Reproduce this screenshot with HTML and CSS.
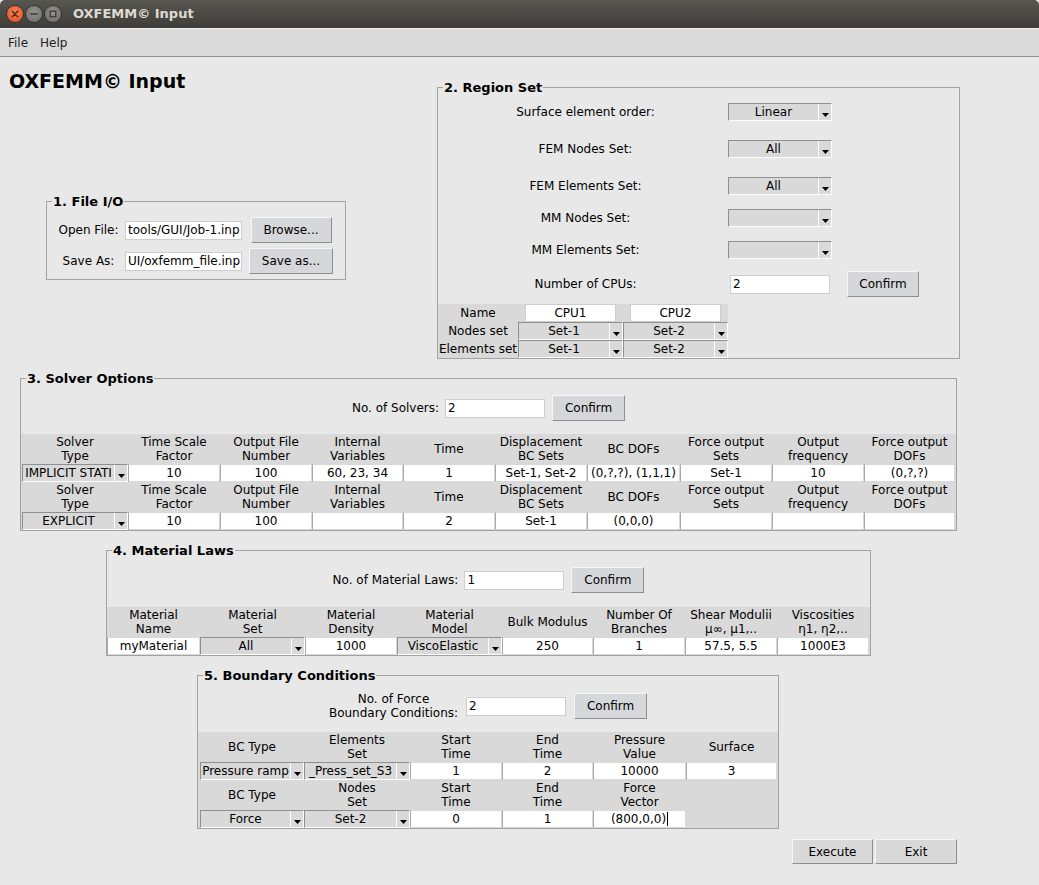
FILE: index.html
```html
<!DOCTYPE html>
<html lang="en">
<head>
<meta charset="utf-8">
<title>OXFEMM© Input</title>
<link rel="stylesheet" href="styles.css">
</head>
<body>
<div class="titlebar">
  <div class="wm-buttons">
    <span class="wm wm-close"><svg width="8" height="8" viewBox="0 0 8 8"><path d="M1.3 1.3L6.7 6.7M6.7 1.3L1.3 6.7" stroke="#4a2416" stroke-width="1.5" stroke-linecap="round"/></svg></span>
    <span class="wm wm-min"><svg width="8" height="8" viewBox="0 0 8 8"><path d="M1 4H7" stroke="#3a3935" stroke-width="1.5" stroke-linecap="round"/></svg></span>
    <span class="wm wm-max"><svg width="8" height="8" viewBox="0 0 8 8"><rect x="1.2" y="1.2" width="5.6" height="5.6" fill="none" stroke="#3a3935" stroke-width="1.3"/></svg></span>
  </div>
  <span class="wm-title">OXFEMM© Input</span>
</div>
<div class="menubar"><span>File</span><span>Help</span></div>
<main class="content">
  <div class="top">
    <div class="left">
      <h1 class="app-title">OXFEMM© Input</h1>
      <fieldset class="frame fileio">
        <legend>1. File I/O</legend>
        <div class="io-grid">
          <span class="io-label">Open File:</span>
          <div class="entry io-entry">tools/GUI/Job-1.inp</div>
          <button class="btn btn-browse">Browse...</button>
          <span class="io-label">Save As:</span>
          <div class="entry io-entry">UI/oxfemm_file.inp</div>
          <button class="btn btn-saveas">Save as...</button>
        </div>
      </fieldset>
    </div>
    <fieldset class="frame region">
      <legend>2. Region Set</legend>
      <div class="rrow">
        <span class="rlabel">Surface element order:</span>
        <div class="dd dd-region"><span class="dd-text">Linear</span><span class="arr"><svg width="7" height="4" viewBox="0 0 7 4"><path d="M0 0H7L3.5 4Z"/></svg></span></div>
      </div>
      <div class="rrow g19">
        <span class="rlabel">FEM Nodes Set:</span>
        <div class="dd dd-region"><span class="dd-text">All</span><span class="arr"><svg width="7" height="4" viewBox="0 0 7 4"><path d="M0 0H7L3.5 4Z"/></svg></span></div>
      </div>
      <div class="rrow g19">
        <span class="rlabel">FEM Elements Set:</span>
        <div class="dd dd-region"><span class="dd-text">All</span><span class="arr"><svg width="7" height="4" viewBox="0 0 7 4"><path d="M0 0H7L3.5 4Z"/></svg></span></div>
      </div>
      <div class="rrow g14">
        <span class="rlabel">MM Nodes Set:</span>
        <div class="dd dd-region"><span class="dd-text"></span><span class="arr"><svg width="7" height="4" viewBox="0 0 7 4"><path d="M0 0H7L3.5 4Z"/></svg></span></div>
      </div>
      <div class="rrow g14">
        <span class="rlabel">MM Elements Set:</span>
        <div class="dd dd-region"><span class="dd-text"></span><span class="arr"><svg width="7" height="4" viewBox="0 0 7 4"><path d="M0 0H7L3.5 4Z"/></svg></span></div>
      </div>
      <div class="rrow cpu-row">
        <span class="rlabel">Number of CPUs:</span>
        <div class="entry cpu-entry">2</div>
        <button class="btn btn-confirm cpu-confirm">Confirm</button>
      </div>
      <div class="cpu-table">
        <div class="ct-label">Name</div>
        <div class="ct-slot"><div class="entry ct-entry">CPU1</div></div>
        <div class="ct-slot"><div class="entry ct-entry">CPU2</div></div>
        <div class="ct-label">Nodes set</div>
        <div class="dd"><span class="dd-text">Set-1</span><span class="arr"><svg width="7" height="4" viewBox="0 0 7 4"><path d="M0 0H7L3.5 4Z"/></svg></span></div>
        <div class="dd"><span class="dd-text">Set-2</span><span class="arr"><svg width="7" height="4" viewBox="0 0 7 4"><path d="M0 0H7L3.5 4Z"/></svg></span></div>
        <div class="ct-label">Elements set</div>
        <div class="dd"><span class="dd-text">Set-1</span><span class="arr"><svg width="7" height="4" viewBox="0 0 7 4"><path d="M0 0H7L3.5 4Z"/></svg></span></div>
        <div class="dd"><span class="dd-text">Set-2</span><span class="arr"><svg width="7" height="4" viewBox="0 0 7 4"><path d="M0 0H7L3.5 4Z"/></svg></span></div>
      </div>
    </fieldset>
  </div>

  <fieldset class="frame solver">
    <legend>3. Solver Options</legend>
    <div class="ctrl-row">
      <span class="ctrl-label">No. of Solvers:</span>
      <div class="entry ctrl-entry">2</div>
      <button class="btn btn-confirm">Confirm</button>
    </div>
    <div class="grid-table solver-table">
      <div class="th">Solver<br>Type</div>
      <div class="th">Time Scale<br>Factor</div>
      <div class="th">Output File<br>Number</div>
      <div class="th">Internal<br>Variables</div>
      <div class="th">Time</div>
      <div class="th">Displacement<br>BC Sets</div>
      <div class="th">BC DOFs</div>
      <div class="th">Force output<br>Sets</div>
      <div class="th">Output<br>frequency</div>
      <div class="th">Force output<br>DOFs</div>

      <div class="dd"><span class="dd-text">IMPLICIT STATI</span><span class="arr"><svg width="7" height="4" viewBox="0 0 7 4"><path d="M0 0H7L3.5 4Z"/></svg></span></div>
      <div class="td">10</div>
      <div class="td">100</div>
      <div class="td">60, 23, 34</div>
      <div class="td">1</div>
      <div class="td">Set-1, Set-2</div>
      <div class="td">(0,?,?), (1,1,1)</div>
      <div class="td">Set-1</div>
      <div class="td">10</div>
      <div class="td">(0,?,?)</div>

      <div class="th">Solver<br>Type</div>
      <div class="th">Time Scale<br>Factor</div>
      <div class="th">Output File<br>Number</div>
      <div class="th">Internal<br>Variables</div>
      <div class="th">Time</div>
      <div class="th">Displacement<br>BC Sets</div>
      <div class="th">BC DOFs</div>
      <div class="th">Force output<br>Sets</div>
      <div class="th">Output<br>frequency</div>
      <div class="th">Force output<br>DOFs</div>

      <div class="dd"><span class="dd-text">EXPLICIT</span><span class="arr"><svg width="7" height="4" viewBox="0 0 7 4"><path d="M0 0H7L3.5 4Z"/></svg></span></div>
      <div class="td">10</div>
      <div class="td">100</div>
      <div class="td"></div>
      <div class="td">2</div>
      <div class="td">Set-1</div>
      <div class="td">(0,0,0)</div>
      <div class="td"></div>
      <div class="td"></div>
      <div class="td"></div>
    </div>
  </fieldset>

  <fieldset class="frame material">
    <legend>4. Material Laws</legend>
    <div class="ctrl-row">
      <span class="ctrl-label">No. of Material Laws:</span>
      <div class="entry ctrl-entry">1</div>
      <button class="btn btn-confirm">Confirm</button>
    </div>
    <div class="grid-table material-table">
      <div class="th">Material<br>Name</div>
      <div class="th">Material<br>Set</div>
      <div class="th">Material<br>Density</div>
      <div class="th">Material<br>Model</div>
      <div class="th">Bulk Modulus</div>
      <div class="th">Number Of<br>Branches</div>
      <div class="th">Shear Modulii<br>μ∞, μ1,..</div>
      <div class="th">Viscosities<br>η1, η2,..</div>

      <div class="td">myMaterial</div>
      <div class="dd"><span class="dd-text">All</span><span class="arr"><svg width="7" height="4" viewBox="0 0 7 4"><path d="M0 0H7L3.5 4Z"/></svg></span></div>
      <div class="td">1000</div>
      <div class="dd"><span class="dd-text">ViscoElastic</span><span class="arr"><svg width="7" height="4" viewBox="0 0 7 4"><path d="M0 0H7L3.5 4Z"/></svg></span></div>
      <div class="td">250</div>
      <div class="td">1</div>
      <div class="td">57.5, 5.5</div>
      <div class="td">1000E3</div>
    </div>
  </fieldset>

  <fieldset class="frame bc">
    <legend>5. Boundary Conditions</legend>
    <div class="ctrl-row bc-ctrl">
      <span class="ctrl-label bc-label">No. of Force<br>Boundary Conditions:</span>
      <div class="entry ctrl-entry">2</div>
      <button class="btn btn-confirm">Confirm</button>
    </div>
    <div class="grid-table bc-table">
      <div class="th">BC Type</div>
      <div class="th">Elements<br>Set</div>
      <div class="th">Start<br>Time</div>
      <div class="th">End<br>Time</div>
      <div class="th">Pressure<br>Value</div>
      <div class="th">Surface</div>

      <div class="dd"><span class="dd-text">Pressure ramp</span><span class="arr"><svg width="7" height="4" viewBox="0 0 7 4"><path d="M0 0H7L3.5 4Z"/></svg></span></div>
      <div class="dd"><span class="dd-text">_Press_set_S3</span><span class="arr"><svg width="7" height="4" viewBox="0 0 7 4"><path d="M0 0H7L3.5 4Z"/></svg></span></div>
      <div class="td">1</div>
      <div class="td">2</div>
      <div class="td">10000</div>
      <div class="td">3</div>

      <div class="th">BC Type</div>
      <div class="th">Nodes<br>Set</div>
      <div class="th">Start<br>Time</div>
      <div class="th">End<br>Time</div>
      <div class="th">Force<br>Vector</div>
      <div class="th"></div>

      <div class="dd"><span class="dd-text">Force</span><span class="arr"><svg width="7" height="4" viewBox="0 0 7 4"><path d="M0 0H7L3.5 4Z"/></svg></span></div>
      <div class="dd"><span class="dd-text">Set-2</span><span class="arr"><svg width="7" height="4" viewBox="0 0 7 4"><path d="M0 0H7L3.5 4Z"/></svg></span></div>
      <div class="td">0</div>
      <div class="td">1</div>
      <div class="td"><span class="caret">(800,0,0)</span></div>
      <div class="blank"></div>
    </div>
  </fieldset>

  <div class="actions">
    <button class="btn btn-action btn-execute">Execute</button>
    <button class="btn btn-action btn-exit">Exit</button>
  </div>
</main>
</body>
</html>
```

FILE: styles.css
```css
* { box-sizing: border-box; }
html, body { margin: 0; padding: 0; }
body {
  width: 1039px;
  height: 885px;
  overflow: hidden;
  background: #e8e8e8;
  color: #000;
  font-family: "DejaVu Sans", sans-serif;
  font-size: 12px;
}

/* window title bar */
.titlebar {
  height: 28px;
  display: flex;
  align-items: center;
  padding-left: 7px;
  background: linear-gradient(#57564f, #3e3d39);
  border-radius: 5px 5px 0 0;
}
.wm-buttons { display: flex; gap: 3px; }
.wm {
  width: 16px;
  height: 16px;
  border-radius: 50%;
  display: flex;
  align-items: center;
  justify-content: center;
}
.wm-close {
  background: radial-gradient(circle at 50% 40%, #f78a5e 0%, #ec6235 55%, #d14b1d 100%);
  box-shadow: 0 0 0 1px #33322e;
}
.wm-min, .wm-max {
  background: radial-gradient(circle at 50% 40%, #95938d 0%, #7c7a75 60%, #65635f 100%);
  box-shadow: 0 0 0 1px #33322e;
}
.wm-title {
  margin-left: 12px;
  color: #dfdbd2;
  font: bold 13px/16px "DejaVu Sans", sans-serif;
}

/* menu bar */
.menubar {
  height: 29px;
  display: flex;
  align-items: center;
  gap: 12px;
  padding-left: 8px;
  background: #dadada;
  border-top: 1px solid #f2f2f2;
  border-bottom: 1px solid #8e8e8e;
  color: #222;
}

/* top area */
.top { display: flex; align-items: flex-start; }
.left { width: 437px; flex: none; }
.app-title {
  margin: 12px 0 0 9px;
  font: bold 19px/24px "DejaVu Sans", sans-serif;
}

/* labelled frames */
.frame {
  margin: 0;
  padding: 0;
  min-width: 0;
  border: 1px solid #a2a2a2;
}
.frame legend {
  margin-left: 5px;
  padding: 0 1px;
  font: bold 13px/15px "DejaVu Sans", sans-serif;
}

/* entries, buttons, dropdowns */
.entry {
  background: #fff;
  border: 1px solid #cdcdcd;
  line-height: 16px;
  padding: 0 2px;
  white-space: nowrap;
  overflow: hidden;
}
.btn {
  font: 12px "DejaVu Sans", sans-serif;
  color: #000;
  background: #d5d7da;
  border: 1px solid;
  border-color: #f6f6f6 #8e8e8e #8e8e8e #f6f6f6;
  padding: 0;
  height: 26px;
}
.dd {
  display: flex;
  height: 18px;
  background: #d9d9d9;
  border: 1px solid;
  border-color: #8f8f8f #fff #fff #8f8f8f;
  overflow: hidden;
}
.dd-text {
  flex: 1;
  min-width: 0;
  text-align: center;
  line-height: 16px;
  white-space: nowrap;
  overflow: hidden;
}
.arr {
  width: 13px;
  flex: none;
  display: flex;
  align-items: flex-end;
  justify-content: center;
  padding-bottom: 3px;
  border-left: 1px solid #fff;
}
.arr svg { display: block; fill: #000; }

/* 1. File I/O */
.fileio { margin: 101px 0 0 46px; width: 300px; }
.io-grid {
  display: grid;
  grid-template-columns: 67px 120px 98px;
  grid-auto-rows: 26px;
  row-gap: 5px;
  padding: 8px 0 5px 8px;
  align-items: center;
}
.io-label { text-align: center; }
.io-entry { margin-left: 3px; width: 117px; height: 19px; }
.btn-browse { width: 81px; justify-self: center; }
.btn-saveas { width: 84px; justify-self: center; }

/* 2. Region Set */
.region { margin-top: 23px; width: 523px; padding-top: 8px; }
.rrow { display: flex; align-items: center; height: 18px; }
.rlabel { width: 290px; flex: none; padding-left: 5px; text-align: center; }
.dd-region { width: 104px; }
.g19 { margin-top: 19px; }
.g14 { margin-top: 14px; }
.cpu-row { margin-top: 12px; height: 26px; }
.cpu-entry { width: 100px; height: 19px; margin-left: 2px; }
.cpu-confirm { margin-left: 17px; width: 72px; }
.cpu-table {
  margin-top: 7px;
  width: 290px;
  display: grid;
  grid-template-columns: 80px 105px 105px;
  grid-auto-rows: 18px;
  background: #d9d9d9;
}
.ct-label { text-align: center; line-height: 18px; white-space: nowrap; }
.ct-slot { display: flex; justify-content: center; }
.ct-entry { width: 91px; height: 18px; text-align: center; }

/* control rows (No. of ...) */
.ctrl-row {
  display: flex;
  justify-content: center;
  align-items: center;
  height: 26px;
  margin-top: 9px;
}
.ctrl-entry { width: 100px; height: 19px; margin-left: 6px; }
.ctrl-row .btn-confirm { width: 73px; margin-left: 7px; }

/* grid tables */
.grid-table {
  display: grid;
  background: #d9d9d9;
  margin-top: 13px;
}
.th {
  height: 30px;
  display: flex;
  align-items: center;
  justify-content: center;
  text-align: center;
  line-height: 14px;
  white-space: nowrap;
}
.td {
  height: 18px;
  background: #fff;
  border: 1px solid #d9d9d9;
  border-left-color: #a9a9a9;
  text-align: center;
  line-height: 16px;
  white-space: nowrap;
  overflow: hidden;
}
.blank { height: 18px; }

/* 3. Solver Options */
.solver { margin: 12px 0 0 20px; width: 937px; }
.solver-table {
  grid-template-columns: 106px 92px 92px 91px 92px 92px 93px 92px 92px 91px;
  padding-left: 1px;
}

/* 4. Material Laws */
.material { margin: 12px 0 0 106px; width: 765px; }
.material-table {
  grid-template-columns: 93px 105px 92px 105px 91px 92px 92px 92px;
  margin-top: 14px;
}

/* 5. Boundary Conditions */
.bc { margin: 12px 0 0 197px; width: 582px; }
.bc-ctrl { height: 28px; }
.bc-label { text-align: center; line-height: 14px; }
.bc-ctrl .ctrl-entry { margin-left: 8px; }
.bc-ctrl .btn-confirm { margin-left: 8px; }
.bc-table {
  grid-template-columns: 104px 106px 92px 91px 93px 91px;
  padding-left: 2px;
  margin-top: 12px;
}
.caret { border-right: 1px solid #000; padding-right: 1px; }

/* bottom actions */
.actions {
  display: flex;
  justify-content: flex-end;
  gap: 2px;
  padding-right: 82px;
  margin-top: 10px;
}
.btn-action { background: #d9d9d9; height: 25px; }
.btn-execute { width: 81px; }
.btn-exit { width: 82px; }
```
